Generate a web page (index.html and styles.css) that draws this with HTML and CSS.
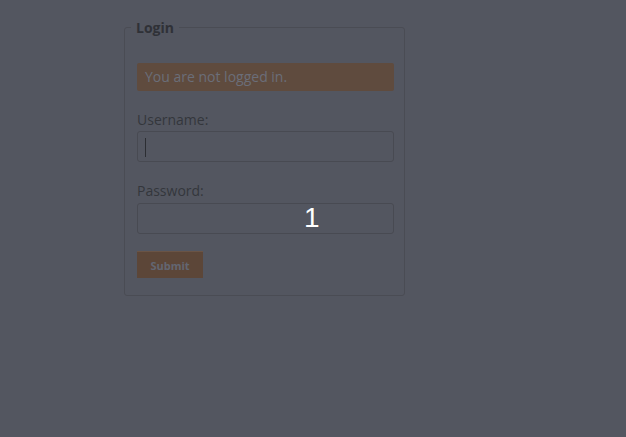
FILE: index.html
```html
<!DOCTYPE html>
<html>
<head>
<meta charset="utf-8">
<link rel="stylesheet" href="styles.css">
</head>
<body>
<div class="page">
  <fieldset class="login">
    <legend class="login-legend">Login</legend>
    <div class="notice">You are not logged in.</div>
    <div class="label">Username:</div>
    <div class="field"><span class="caret"></span></div>
    <div class="label">Password:</div>
    <div class="field"></div>
    <div class="submit">Submit</div>
  </fieldset>
</div>
<div class="badge">1</div>
</body>
</html>
```
FILE: styles.css
```css
html, body {
  margin: 0;
  padding: 0;
  background: #535660;
  height: 100%;
}
body {
  font-family: "Open Sans", "DejaVu Sans", sans-serif;
  font-size: 14px;
  color: #34363c;
  position: relative;
}
.page {
  padding-top: 18px;
  padding-left: 124px;
}
.login {
  width: 257px;
  margin: 0;
  padding: 0 10px 17px 12px;
  border: 1px solid #4a4c54;
  border-radius: 3px;
}
.login-legend {
  padding: 0 5px;
  margin-left: -6px;
  font-weight: bold;
  line-height: 19px;
  color: #2f3137;
}
.notice {
  margin-top: 26px;
  height: 28px;
  line-height: 28px;
  padding-left: 8px;
  background: #5f4b3e;
  border-radius: 2px;
  color: #6b6e79;
}
.label {
  margin-top: 19px;
  line-height: 19px;
}
.field {
  margin-top: 2px;
  height: 29px;
  border: 1px solid #484a52;
  border-radius: 3px;
  position: relative;
}
.field + .label + .field {
  margin-top: 3px;
}
.caret {
  position: absolute;
  left: 7px;
  top: 6px;
  width: 1px;
  height: 19px;
  background: #2c2e33;
}
.submit {
  margin-top: 17px;
  width: 66px;
  height: 27px;
  line-height: 27px;
  text-align: center;
  font-size: 11px;
  font-weight: bold;
  background: #5c4638;
  border-top: 1px solid #6a5446;
  box-sizing: border-box;
  color: #636672;
}
.badge {
  position: absolute;
  left: 304px;
  top: 204px;
  font-family: "Liberation Sans", Arial, sans-serif;
  font-size: 28px;
  line-height: 28px;
  color: #ffffff;
}
```
